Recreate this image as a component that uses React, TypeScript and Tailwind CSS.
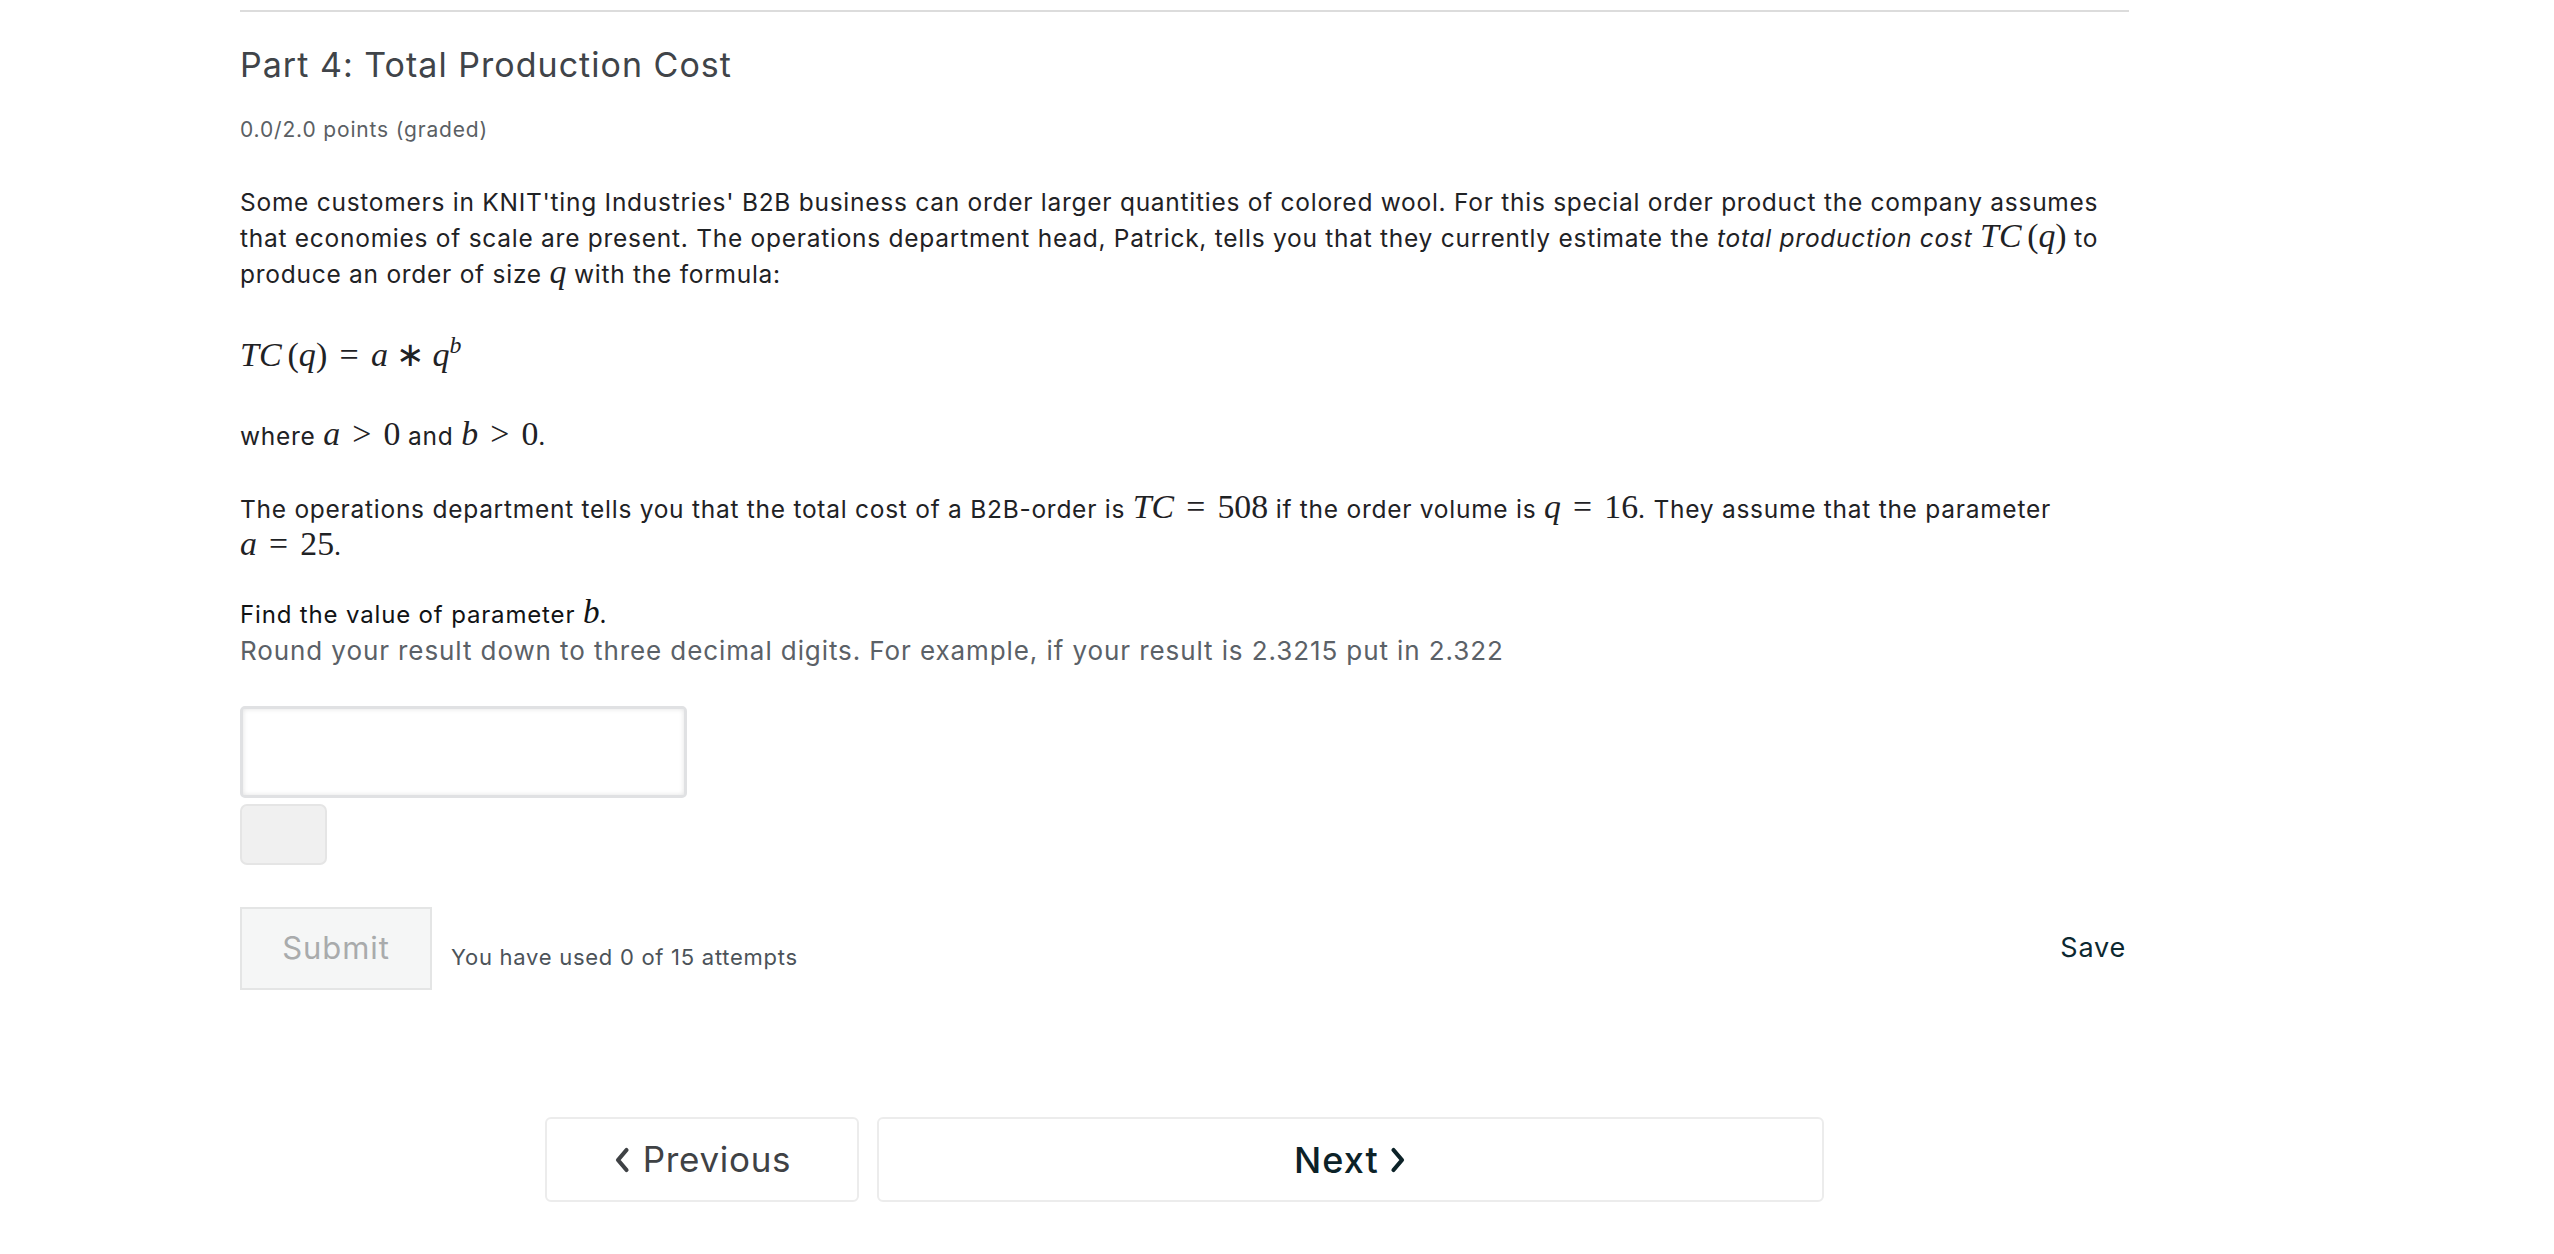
import type { ReactNode } from "react";

function M({ children, big }: { children: ReactNode; big?: boolean }) {
  return (
    <span
      className={
        (big ? "text-[1.42em] " : "text-[1.38em] ") +
        "font-['Liberation_Serif',serif] leading-none tracking-normal not-italic"
      }
    >
      {children}
    </span>
  );
}

function V({ children }: { children: ReactNode }) {
  return <i className="italic">{children}</i>;
}

function Op({ children, thin }: { children: ReactNode; thin?: boolean }) {
  return <span className={thin ? "mx-[0.24em]" : "mx-[0.36em]"}>{children}</span>;
}

function Chevron({ dir }: { dir: "left" | "right" }) {
  return (
    <svg width="18" height="30" viewBox="0 0 18 30" fill="none" className="shrink-0">
      <path
        d={dir === "left" ? "M13.5 5 L5 15 L13.5 25" : "M4.5 5 L13 15 L4.5 25"}
        stroke="currentColor"
        strokeWidth="4.2"
        strokeLinecap="round"
        strokeLinejoin="round"
      />
    </svg>
  );
}

export default function App() {
  return (
    <div className="min-h-screen bg-white font-['Inter','Liberation_Sans',sans-serif] text-[#1f2225]">
      <div className="ml-[240px] w-[1889px] pt-[10px]">
        <div className="border-t-2 border-[#dcdcdc]" />

        <h3 className="mt-[31px] text-[34px] leading-[44px] font-normal tracking-[0.03em] text-[#404449]">
          Part 4: Total Production Cost
        </h3>
        <div className="mt-[30px] text-[21px] leading-[26px] tracking-[0.04em] text-[#5b5f64]">
          0.0/2.0 points (graded)
        </div>

        <p className="mt-[42px] text-[24.5px] leading-[34px] tracking-[0.03em]">
          Some customers in KNIT'ting Industries' B2B business can order larger quantities of colored wool. For this
          special order product the company assumes that economies of scale are present. The operations department head,
          Patrick, tells you that they currently estimate the <em>total production cost</em>{" "}
          <M>
            <V>TC</V>
            <span className="ml-[0.17em]">(</span>
            <V>q</V>)
          </M>{" "}
          to produce an order of size{" "}
          <M>
            <V>q</V>
          </M>{" "}
          with the formula:
        </p>

        <div className="mt-[45px] text-[24px] leading-[44px]">
          <M big>
            <V>TC</V>
            <span className="ml-[0.17em]">(</span>
            <V>q</V>)<Op>=</Op>
            <V>a</V>
            <Op thin>∗</Op>
            <V>q</V>
            <sup className="-top-[0.55em] text-[0.7em] italic">b</sup>
          </M>
        </div>

        <p className="mt-[37px] text-[24.5px] leading-[38px] tracking-[0.03em]">
          where{" "}
          <M>
            <V>a</V>
            <Op>&gt;</Op>0
          </M>{" "}
          and{" "}
          <M>
            <V>b</V>
            <Op>&gt;</Op>0
          </M>
          .
        </p>

        <p className="mt-[35px] text-[24.5px] leading-[36px] tracking-[0.03em]">
          The operations department tells you that the total cost of a B2B-order is{" "}
          <M>
            <V>TC</V>
            <Op>=</Op>508
          </M>{" "}
          if the order volume is{" "}
          <M>
            <V>q</V>
            <Op>=</Op>16
          </M>
          . They assume that the parameter{" "}
          <M>
            <V>a</V>
            <Op>=</Op>25
          </M>
          .
        </p>

        <div className="mt-[31px] text-[24px] leading-[36px] tracking-[0.035em] text-[#111315]">
          Find the value of parameter{" "}
          <M>
            <V>b</V>
          </M>
          .
        </div>
        <div className="text-[26px] leading-[36px] tracking-[0.035em] text-[#5b6167]">
          Round your result down to three decimal digits. For example, if your result is 2.3215 put in 2.322
        </div>

        <input
          type="text"
          aria-label="answer"
          className="mt-[37px] block h-[92px] w-[447px] rounded-[5px] border-[3px] border-[#e0e1e3] bg-white shadow-[inset_0_0_5px_rgba(0,0,0,0.12)] outline-none"
        />
        <div className="mt-[6px] h-[61px] w-[87px] rounded-[7px] border-2 border-[#e5e5e5] bg-[#f0f0f0]" />

        <div className="mt-[42px] flex items-center justify-between">
          <div className="flex items-center gap-[19px]">
            <button className="h-[83px] w-[192px] border-2 border-[#e4e5e5] bg-[#f5f6f6] text-[31px] tracking-[0.03em] text-[#a9abac]">
              Submit
            </button>
            <span className="mt-[17px] text-[22px] tracking-[0.033em] text-[#4c5359]">
              You have used 0 of 15 attempts
            </span>
          </div>
          <span className="mr-[3px] text-[27px] tracking-[0.03em] text-[#0c2830]">Save</span>
        </div>

        <div className="mt-[127px] flex justify-center gap-[18px]">
          <button className="flex h-[85px] w-[314px] items-center justify-center gap-[12px] rounded-[6px] border-2 border-[#ececec] bg-white text-[35px] tracking-[0.02em] text-[#3f4245]">
            <Chevron dir="left" />
            Previous
          </button>
          <button className="flex h-[85px] w-[947px] items-center justify-center gap-[10px] rounded-[6px] border-2 border-[#ececec] bg-white text-[36px] font-medium tracking-[0.03em] text-[#0c2228]">
            Next
            <Chevron dir="right" />
          </button>
        </div>
      </div>
    </div>
  );
}
